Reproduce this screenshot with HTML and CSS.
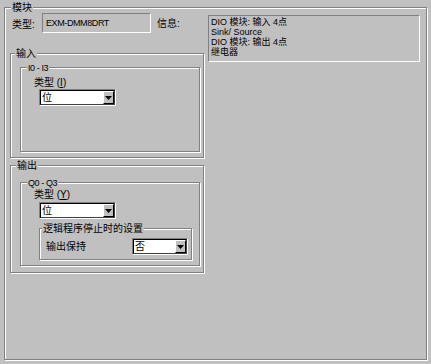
FILE: index.html
```html
<!DOCTYPE html>
<html>
<head>
<meta charset="utf-8">
<link rel="stylesheet" href="styles.css">
</head>
<body>
<div class="group outer">
  <div class="legend lg-outer">模块</div>
  <div class="cols">
    <div class="left">
      <div class="row1">
        <span class="lbl type-lbl">类型:</span>
        <div class="static type-box">EXM-DMM8DRT</div>
        <span class="lbl info-lbl">信息:</span>
      </div>
      <div class="group g-in">
        <div class="legend lg-in">输入</div>
        <div class="group g-sub g-i">
          <div class="legend lg-sub latin">I0 - I3</div>
          <div class="lbl sub-lbl lbl-i">类型 (<u>I</u>)</div>
          <div class="combo combo-type">
            <div class="combo-in">
              <span class="val">位</span>
              <span class="btn"><svg width="7" height="4" viewBox="0 0 7 4"><polygon points="0,0 7,0 3.5,4" fill="#000"/></svg></span>
            </div>
          </div>
        </div>
      </div>
      <div class="group g-out">
        <div class="legend lg-out">输出</div>
        <div class="group g-sub g-q">
          <div class="legend lg-sub latin">Q0 - Q3</div>
          <div class="lbl sub-lbl lbl-q">类型 (<u>Y</u>)</div>
          <div class="combo combo-type combo-q">
            <div class="combo-in">
              <span class="val">位</span>
              <span class="btn"><svg width="7" height="4" viewBox="0 0 7 4"><polygon points="0,0 7,0 3.5,4" fill="#000"/></svg></span>
            </div>
          </div>
          <div class="group g-stop">
            <div class="legend lg-stop">逻辑程序停止时的设置</div>
            <div class="stop-row">
              <span class="lbl">输出保持</span>
              <div class="combo combo-hold">
                <div class="combo-in">
                  <span class="val">否</span>
                  <span class="btn"><svg width="7" height="4" viewBox="0 0 7 4"><polygon points="0,0 7,0 3.5,4" fill="#000"/></svg></span>
                </div>
              </div>
            </div>
          </div>
        </div>
      </div>
    </div>
    <div class="static info-box">
      <div>DIO 模块: 输入 4点</div>
      <div>Sink/ Source</div>
      <div>DIO 模块: 输出 4点</div>
      <div>继电器</div>
    </div>
  </div>
</div>
</body>
</html>
```

FILE: styles.css
```css
html, body {
  margin: 0;
  padding: 0;
  background: #c0c0c0;
}
body {
  width: 431px;
  height: 364px;
  overflow: hidden;
  font-family: "Liberation Sans", "Noto Sans CJK SC", sans-serif;
  font-size: 10px;
  color: #000;
  padding-top: 7px;
  padding-left: 4px;
  box-sizing: border-box;
}

.group {
  box-sizing: border-box;
  border: 1px solid #808080;
  box-shadow: inset 1px 1px 0 #fff, 1px 1px 0 #fff;
}

/* legend sits centred on the top border line; its bottom margin
   sets the gap to the group's first row */
.legend {
  width: fit-content;
  height: 12px;
  line-height: 12px;
  margin-top: -6px;
  margin-bottom: -6px;
  padding: 0 1px;
  background: #c0c0c0;
  white-space: nowrap;
}
.latin {
  font-size: 9px;
  letter-spacing: -0.4px;
}

.outer {
  width: 423px;
  height: 353px;
  padding-left: 5px;
}
.lg-outer { margin-left: 1px; margin-bottom: -1px; }

.cols {
  display: flex;
  gap: 4px;
}
.left {
  width: 194px;
  display: flex;
  flex-direction: column;
}

.row1 {
  display: flex;
  align-items: flex-start;
  height: 20px;
}
.lbl {
  line-height: 12px;
  white-space: nowrap;
}
.type-lbl {
  width: 30px;
  margin-left: 2px;
  margin-top: 6px;
}
.info-lbl {
  margin-left: 6px;
  margin-top: 5px;
}

.static {
  box-sizing: border-box;
  border: 1px solid;
  border-color: #808080 #fff #fff #808080;
}
.type-box {
  width: 109px;
  height: 20px;
  font-size: 9px;
  letter-spacing: -0.4px;
  line-height: 18px;
  padding-left: 3px;
}
.info-box {
  width: 212px;
  height: 47px;
  margin-top: 2px;
  padding: 1px 0 0 2px;
  font-size: 9px;
  line-height: 10px;
}

.g-in {
  margin-top: 20px;
  height: 105px;
  padding-left: 9px;
}
.lg-in { margin-left: -5px; margin-bottom: 7px; }

.g-out {
  margin-top: 7px;
  height: 108px;
  padding-left: 9px;
}
.lg-out { margin-left: -4px; margin-bottom: 10px; }

.g-sub {
  width: 180px;
}
.g-i { height: 85px; }
.g-q { height: 84px; }
.lg-sub { margin-left: 6px; }

.sub-lbl { margin-left: 13px; }
.lbl-i { margin-top: 9px; }
.lbl-q { margin-top: 6px; }

.combo {
  box-sizing: border-box;
  height: 17px;
  border: 1px solid;
  border-color: #808080 #fff #fff #808080;
  display: flex;
}
.combo-in {
  flex: 1;
  display: flex;
  border: 1px solid;
  border-color: #000 #404040 #404040 #000;
  background: #fff;
}
.val {
  flex: 1;
  line-height: 13px;
  padding-left: 1px;
}
.btn {
  box-sizing: border-box;
  width: 11px;
  border: 1px solid;
  border-color: #fff #000 #000 #fff;
  background: #c0c0c0;
  display: flex;
  align-items: center;
  justify-content: center;
}
.combo-type {
  width: 77px;
  margin-left: 18px;
}
.combo-q { margin-top: 1px; }

.g-stop {
  width: 153px;
  height: 32px;
  margin-left: 18px;
  margin-top: 9px;
}
.lg-stop { margin-left: 2px; }
.stop-row {
  display: flex;
  justify-content: space-between;
  align-items: center;
  padding: 9px 3px 0 6px;
}
.combo-hold {
  width: 56px;
}
```
